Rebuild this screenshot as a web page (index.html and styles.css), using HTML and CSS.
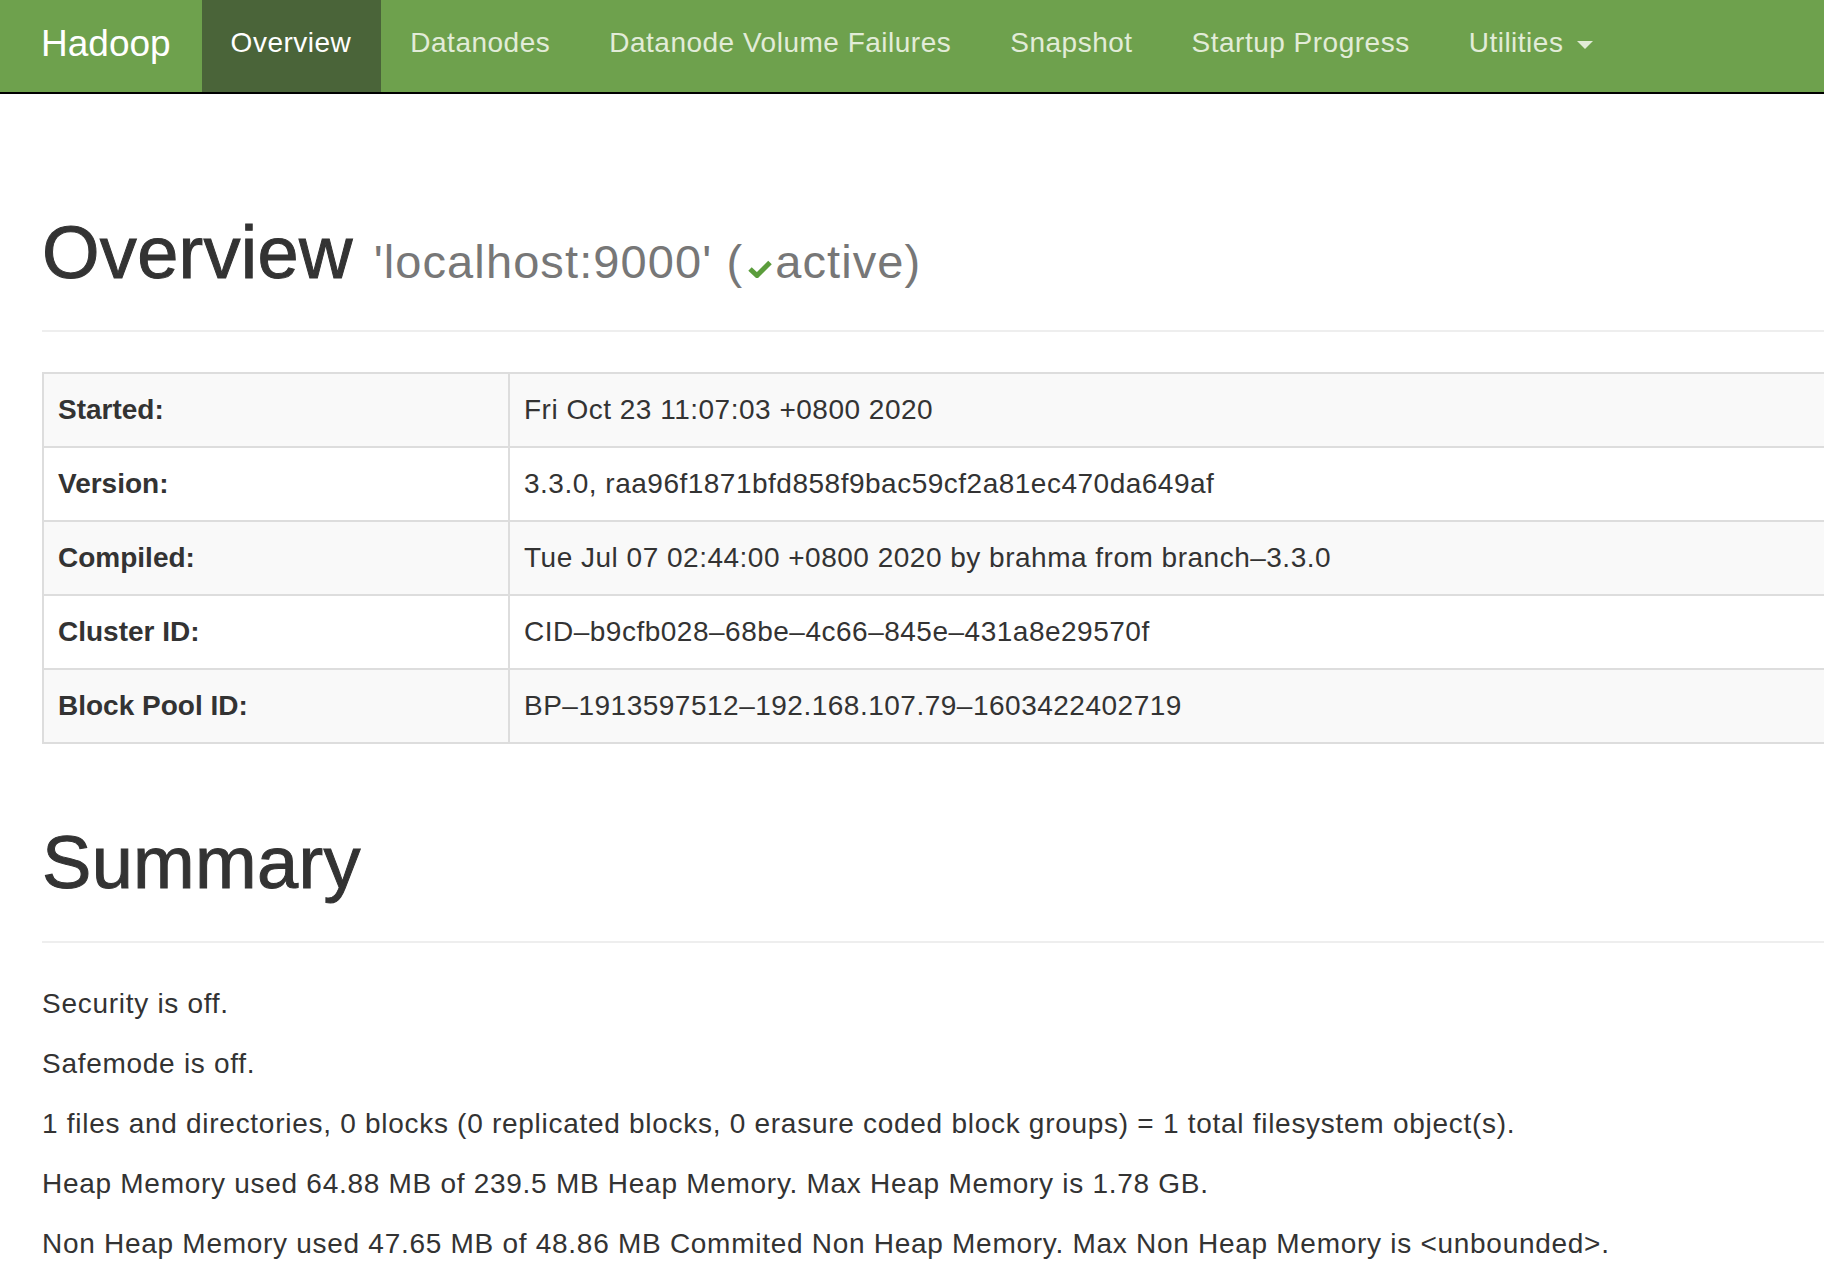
FILE: index.html
```html
<!DOCTYPE html>
<html lang="en">
<head>
<meta charset="utf-8">
<title>Namenode information</title>
<link rel="stylesheet" href="styles.css">
</head>
<body>
<header class="navbar">
  <a class="brand" href="#">Hadoop</a>
  <nav class="nav">
    <a class="nav-link active" href="#">Overview</a>
    <a class="nav-link" href="#">Datanodes</a>
    <a class="nav-link" href="#">Datanode Volume Failures</a>
    <a class="nav-link" href="#">Snapshot</a>
    <a class="nav-link" href="#">Startup Progress</a>
    <a class="nav-link" href="#">Utilities<span class="caret"></span></a>
  </nav>
</header>

<main class="container">
  <div class="page-header first">
    <h1>Overview <small>'localhost:9000' (<svg class="ok" viewBox="0 0 24 18" width="24" height="18" aria-hidden="true"><polyline points="2,9 9,15.5 22,2.5" fill="none" stroke="#5b9d3c" stroke-width="5"/></svg>active)</small></h1>
  </div>

  <table class="info">
    <tbody>
      <tr><th>Started:</th><td>Fri Oct 23 11:07:03 +0800 2020</td></tr>
      <tr><th>Version:</th><td>3.3.0, raa96f1871bfd858f9bac59cf2a81ec470da649af</td></tr>
      <tr><th>Compiled:</th><td>Tue Jul 07 02:44:00 +0800 2020 by brahma from branch–3.3.0</td></tr>
      <tr><th>Cluster ID:</th><td>CID–b9cfb028–68be–4c66–845e–431a8e29570f</td></tr>
      <tr><th>Block Pool ID:</th><td>BP–1913597512–192.168.107.79–1603422402719</td></tr>
    </tbody>
  </table>

  <div class="page-header second">
    <h1>Summary</h1>
  </div>

  <section class="summary">
    <p>Security is off.</p>
    <p>Safemode is off.</p>
    <p>1 files and directories, 0 blocks (0 replicated blocks, 0 erasure coded block groups) = 1 total filesystem object(s).</p>
    <p>Heap Memory used 64.88 MB of 239.5 MB Heap Memory. Max Heap Memory is 1.78 GB.</p>
    <p>Non Heap Memory used 47.65 MB of 48.86 MB Commited Non Heap Memory. Max Non Heap Memory is &lt;unbounded&gt;.</p>
  </section>
  <hr class="rule">
</main>
</body>
</html>
```

FILE: styles.css
```css
html, body {
  margin: 0;
  padding: 0;
  background: #fff;
  overflow: hidden;
}

body {
  font-family: "Liberation Sans", Arial, sans-serif;
  font-size: 28px;
  line-height: 40px;
  color: #333;
  width: 1824px;
}

/* ---------- navbar ---------- */
.navbar {
  display: flex;
  align-items: stretch;
  height: 92px;
  background: #6ea14d;
  border-bottom: 2px solid #000;
  padding-left: 11px;
}

.brand {
  display: block;
  padding: 0 31px 5px 30px;
  font-size: 37px;
  line-height: 87px;
  color: #fff;
  text-decoration: none;
}

.nav {
  display: flex;
  align-items: stretch;
}

.nav-link {
  display: flex;
  align-items: center;
  padding: 0 30px 7px 29px;
  font-size: 28px;
  line-height: 85px;
  letter-spacing: 0.5px;
  color: #e2ecd8;
  text-decoration: none;
  white-space: nowrap;
}

.nav-link.active {
  background: #4a6439;
  color: #fff;
}

.caret {
  display: inline-block;
  width: 0;
  height: 0;
  margin-left: 14px;
  margin-top: 4px;
  border-top: 8px solid #e2ecd8;
  border-left: 8px solid transparent;
  border-right: 8px solid transparent;
}

/* ---------- content ---------- */
.container {
  padding-left: 42px;
  width: 2400px;
}

.page-header {
  border-bottom: 2px solid #eee;
  padding-bottom: 37px;
}

.page-header.first {
  margin-top: 118px;
}

.page-header.second {
  margin-top: 78px;
}

h1 {
  margin: 0;
  font-size: 74px;
  line-height: 1.1;
  font-weight: 400;
  letter-spacing: 0.3px;
  color: #333;
  -webkit-text-stroke: 1px #333;
}

h1 small {
  font-size: 47px;
  color: #777;
  letter-spacing: 1.1px;
  font-weight: 400;
  -webkit-text-stroke: 0;
}

.ok {
  display: inline-block;
  vertical-align: baseline;
  width: 24px;
  height: 18px;
  margin: 0 3px 0 5px;
}

/* ---------- table ---------- */
.info {
  margin-top: 40px;
  border-collapse: collapse;
  width: 2200px;
  border: 2px solid #ddd;
}

.info th,
.info td {
  border: 2px solid #ddd;
  padding: 16px 14px;
  line-height: 40px;
  text-align: left;
  vertical-align: top;
}

.info th {
  width: 436px;
  font-weight: bold;
  color: #333;
}

.info td {
  letter-spacing: 0.5px;
}

.info tr:nth-child(odd) {
  background: #f9f9f9;
}

/* ---------- summary ---------- */
.summary {
  margin-top: 41px;
}

.summary p {
  margin: 0 0 20px 0;
  letter-spacing: 0.72px;
}

.rule {
  margin: 0;
  border: 0;
  border-top: 2px solid #eee;
  height: 0;
}
```
